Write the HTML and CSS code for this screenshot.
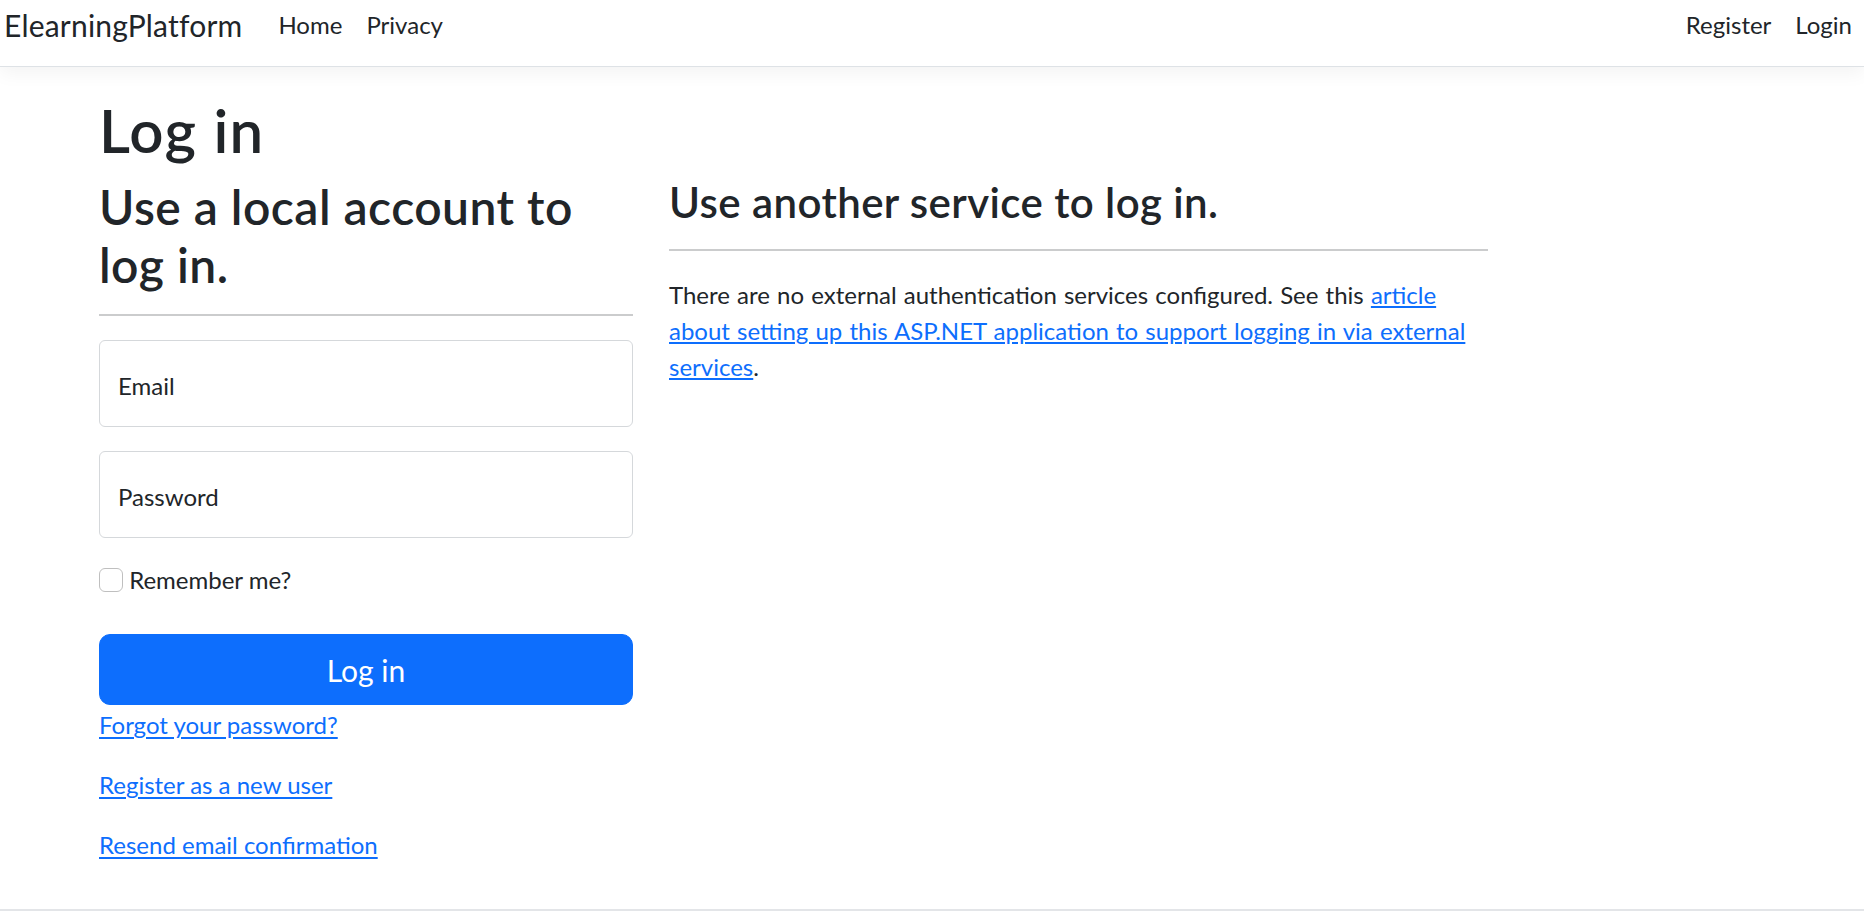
FILE: index.html
```html
<!DOCTYPE html>
<html lang="en">
<head>
<meta charset="utf-8">
<title>Log in - ElearningPlatform</title>
<link rel="stylesheet" href="styles.css">
</head>
<body>
<header>
  <nav class="navbar">
    <a class="brand" href="#">ElearningPlatform</a>
    <ul class="nav-list">
      <li><a class="nav-link" href="#">Home</a></li>
      <li><a class="nav-link" href="#">Privacy</a></li>
    </ul>
    <ul class="nav-list nav-auth">
      <li><a class="nav-link" href="#">Register</a></li>
      <li><a class="nav-link" href="#">Login</a></li>
    </ul>
  </nav>
</header>
<div class="container">
  <main class="main">
    <h1>Log in</h1>
    <div class="row">
      <div class="col-left">
        <section>
          <form class="login-form">
            <h2>Use a local account to log in.</h2>
            <hr>
            <div class="field">
              <input class="form-control" type="email" placeholder="Email" aria-label="Email">
            </div>
            <div class="field">
              <input class="form-control" type="password" placeholder="Password" aria-label="Password">
            </div>
            <div class="check-row">
              <label class="check-label"><input class="check-input" type="checkbox"> Remember me?</label>
            </div>
            <div>
              <button class="btn-primary" type="button">Log in</button>
            </div>
            <div class="links">
              <p><a href="#">Forgot your password?</a></p>
              <p><a href="#">Register as a new user</a></p>
              <p><a href="#">Resend email confirmation</a></p>
            </div>
          </form>
        </section>
      </div>
      <div class="col-right">
        <section>
          <h3>Use another service to log in.</h3>
          <hr>
          <p class="external">There are no external authentication services configured. See this <a href="#">article about setting up this ASP.NET application to support logging in via external services</a>.</p>
        </section>
      </div>
    </div>
  </main>
</div>
<footer class="footer"></footer>
</body>
</html>
```

FILE: styles.css
```css
* {
  box-sizing: border-box;
}

html, body {
  margin: 0;
  padding: 0;
}

body {
  font-family: Lato, "Open Sans", sans-serif;
  font-size: 24px;
  line-height: 1.5;
  color: #212529;
  background: #fff;
}

a {
  color: #0d6efd;
}

/* ---------- navbar ---------- */
.navbar {
  display: flex;
  align-items: flex-start;
  height: 67px;
  padding-left: 4px;
  border-bottom: 1px solid #dee2e6;
  box-shadow: 0 6px 18px rgba(0, 0, 0, 0.05);
  margin-bottom: 24px;
  background: #fff;
}

.brand {
  font-size: 30px;
  line-height: 45px;
  padding-top: 3px;
  margin-right: 24px;
  color: #212529;
  text-decoration: none;
  letter-spacing: 0.2px;
}

.nav-list {
  display: flex;
  list-style: none;
  margin: 0;
  padding: 0;
}

.nav-auth {
  margin-left: auto;
}

.nav-link {
  display: block;
  font-size: 24px;
  line-height: 36px;
  padding: 7px 12px;
  color: #212529;
  text-decoration: none;
}

/* ---------- layout ---------- */
.container {
  width: 1710px;
  margin-left: 81px;
  padding: 0 18px;
}

.main {
  padding-bottom: 24px;
}

h1, h2, h3 {
  font-weight: 600;
  line-height: 1.2;
  padding-top: 3px;
  margin: 0 0 -3px;
  letter-spacing: 0.01em;
}

h1 {
  font-size: 60px;
  margin-bottom: 9px;
  letter-spacing: 0.02em;
}

h2 {
  font-size: 48px;
}

h3 {
  font-size: 42px;
  padding-top: 2px;
  margin-bottom: -2px;
}

hr {
  margin: 24px 0;
  border: 0;
  border-top: 2px solid #cbcccd;
  height: 0;
}

.row {
  display: flex;
  margin: 0 -18px;
}

.col-left {
  width: 570px;
  padding: 0 18px;
}

.col-right {
  width: 855px;
  padding: 0 18px;
}

/* ---------- form ---------- */
.field {
  margin-bottom: 24px;
}

.form-control {
  display: block;
  width: 100%;
  height: 87px;
  padding: 3px 18px 0;
  font-family: inherit;
  font-size: 24px;
  color: #212529;
  background: #fff;
  border: 1px solid #d5d8db;
  border-radius: 6px;
  outline: none;
}

.form-control::placeholder {
  color: #212529;
  opacity: 1;
}

.check-row {
  margin-bottom: 24px;
}

.check-label {
  display: inline-block;
  margin-bottom: 12px;
  line-height: 36px;
}

.check-input {
  appearance: none;
  -webkit-appearance: none;
  width: 24px;
  height: 24px;
  margin: 6px 0 0;
  vertical-align: top;
  border: 1px solid #bfbfbf;
  border-radius: 6px;
  background: #fff;
}

.btn-primary {
  display: block;
  width: 100%;
  height: 71px;
  padding-top: 2px;
  font-family: inherit;
  font-size: 30px;
  line-height: 45px;
  color: #fff;
  background: #0d6efd;
  border: 1px solid #0d6efd;
  border-radius: 11px;
  cursor: pointer;
}

.links p {
  padding-top: 2px;
  margin: 0 0 22px;
}

.links a {
  text-underline-offset: 3px;
}

.external {
  padding-top: 2px;
  margin: 0 0 22px;
  word-spacing: 1px;
}

/* ---------- footer ---------- */
.footer {
  height: 60px;
  border-top: 2px solid #e3e5e8;
}
```
